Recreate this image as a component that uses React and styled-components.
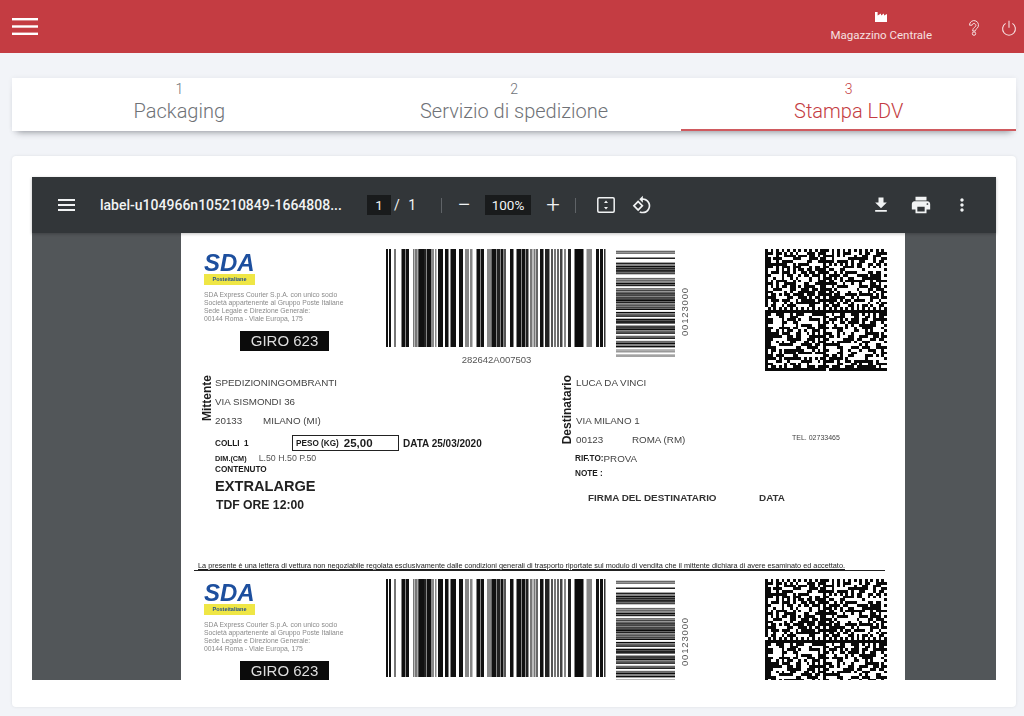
import React from "react";
import styled, { createGlobalStyle } from "styled-components";

const GlobalStyle = createGlobalStyle`
  html, body { margin: 0; padding: 0; background: #f2f4f8; }
  body { font-family: Roboto, "Liberation Sans", sans-serif; }
`;

const RED = "#c43c42";

const Page = styled.div`
  width: 1024px;
  height: 716px;
  overflow: hidden;
  background: #f2f4f8;
`;

const TopBar = styled.header`
  height: 53px;
  background: ${RED};
  display: flex;
  align-items: center;
  justify-content: space-between;
  padding: 0 7px 0 12px;
  box-sizing: border-box;
  color: #fff;
`;

const TopRight = styled.div`
  display: flex;
  align-items: center;
`;

const Warehouse = styled.div`
  display: flex;
  flex-direction: column;
  align-items: center;
  font-size: 11.5px;
  line-height: 14px;
  color: #f6e0e1;
  margin: 1px 36px 0 0;
  svg { margin-bottom: 6px; }
`;

const TopIcon = styled.span`
  display: flex;
  margin-right: ${(p) => p.$gap || 0}px;
  margin-top: 2px;
`;

const Tabs = styled.nav`
  margin: 25px 8px 0 12px;
  height: 53px;
  display: flex;
  background: #fff;
  box-shadow: 0 6px 7px -5px rgba(30, 35, 45, 0.45), 0 0 5px rgba(30, 35, 45, 0.06);
`;

const Tab = styled.div`
  flex: 1;
  box-sizing: border-box;
  display: flex;
  flex-direction: column;
  align-items: center;
  padding-top: 3px;
  color: ${(p) => (p.$active ? RED : "#6f7277")};
  border-bottom: 2px solid ${(p) => (p.$active ? "#cf5a5f" : "transparent")};
`;

const TabNum = styled.span`
  font-size: 14px;
  line-height: 16px;
  font-weight: 300;
`;

const TabLabel = styled.span`
  font-size: 20px;
  line-height: 28px;
  font-weight: 300;
`;

const Card = styled.section`
  margin: 25px 8px 0 12px;
  padding: 21px 20px 27px;
  background: #fff;
  border-radius: 4px;
  box-shadow: 0 0 3px rgba(30, 35, 45, 0.1);
`;

const Viewer = styled.div`
  height: 503px;
  display: flex;
  flex-direction: column;
  background: #525659;
`;

const PdfBar = styled.div`
  height: 56px;
  flex: none;
  display: flex;
  align-items: center;
  background: #323639;
  color: #f1f3f4;
  box-shadow: 0 1px 3px rgba(0, 0, 0, 0.25);
  position: relative;
  z-index: 1;
`;

const PdfIcon = styled.span`
  display: flex;
  margin-left: ${(p) => p.$left || 0}px;
`;

const FileName = styled.span`
  margin-left: 25px;
  width: 267px;
  font-size: 14px;
  font-weight: 500;
  white-space: nowrap;
`;

const NumBox = styled.span`
  width: ${(p) => p.$w}px;
  height: 20px;
  background: #191b1c;
  font-size: 13.5px;
  line-height: 20px;
  text-align: center;
`;

const PageTotal = styled.span`
  margin-left: 3px;
  font-size: 14px;
  width: 22px;
  display: flex;
  justify-content: space-between;
`;

const Sep = styled.span`
  width: 1px;
  height: 15px;
  background: #5f6367;
  margin-left: ${(p) => p.$left}px;
`;

const Glyph = styled.span`
  font-size: 24px;
  font-weight: 300;
  line-height: 20px;
  width: 18px;
  text-align: center;
  margin: 0 ${(p) => p.$right}px 0 ${(p) => p.$left}px;
`;

const PdfBody = styled.div`
  flex: 1;
  min-height: 0;
  overflow: hidden;
  padding-left: 149px;
`;

const Sheet = styled.div`
  width: 724px;
  height: 447px;
  overflow: hidden;
  background: #fff;
`;

const SheetInner = styled.div`
  padding: 16px 0 0 23px;
  filter: blur(0.5px);
  font-family: "Liberation Sans", Arial, sans-serif;
  color: #1c1c1c;
`;

const Head = styled.div`
  height: 124px;
  display: grid;
  grid-template-columns: 182px 230px 149px 122px;
`;

const LogoCol = styled.div`
  padding-top: 4px;
`;

const Sda = styled.div`
  width: 51px;
  font-size: 24px;
  line-height: 19px;
  font-weight: 700;
  font-style: italic;
  color: #1d4f9e;
  white-space: nowrap;
`;

const Poste = styled.div`
  width: 51px;
  height: 11px;
  margin-top: 2px;
  background: #efe645;
  color: #24508f;
  font-size: 5.5px;
  line-height: 11px;
  font-weight: 700;
  text-align: center;
`;

const Legal = styled.div`
  margin-top: 6px;
  font-size: 6.8px;
  line-height: 8px;
  color: #8a8a8a;
  white-space: nowrap;
`;

const Giro = styled.div`
  margin: 8px 0 0 36px;
  width: 89px;
  height: 20px;
  background: #0b0b0b;
  color: #dedede;
  font-size: 15px;
  line-height: 20px;
  text-align: center;
`;

const BarCol = styled.div`
  display: flex;
  flex-direction: column;
  svg { display: block; }
`;

const BarNumber = styled.div`
  width: 221px;
  margin-top: 7px;
  font-size: 9.5px;
  line-height: 12px;
  text-align: center;
  color: #555;
`;

const StackCol = styled.div`
  display: flex;
  align-items: flex-start;
  svg { display: block; }
`;

const StackNumber = styled.span`
  writing-mode: vertical-rl;
  transform: rotate(180deg);
  margin: 38px 0 0 5px;
  font-size: 9.5px;
  line-height: 10px;
  letter-spacing: 0.85px;
  color: #555;
`;

const Body = styled.div`
  height: 187px;
  display: flex;
`;

const Sender = styled.div`
  width: 359px;
  flex: none;
`;

const Address = styled.div`
  display: flex;
`;

const SideTitle = styled.span`
  writing-mode: vertical-rl;
  transform: rotate(180deg);
  align-self: flex-start;
  width: ${(p) => p.$w}px;
  margin: 2px ${(p) => p.$gap}px 0 0;
  font-size: 12px;
  line-height: ${(p) => p.$w}px;
  font-weight: 700;
  white-space: nowrap;
`;

const AddrLines = styled.div`
  flex: 1;
`;

const AddrLine = styled.div`
  height: 19px;
  display: flex;
  align-items: center;
  font-size: 9.8px;
  color: #444;
  white-space: nowrap;
`;

const Cell = styled.span`
  width: ${(p) => p.$w}px;
  flex: none;
`;

const Tel = styled.span`
  font-size: 7px;
  margin-bottom: 4px;
`;

const Details = styled.div`
  padding-left: 11px;
`;

const ColliRow = styled.div`
  margin-top: 5px;
  height: 16px;
  display: flex;
  align-items: center;
`;

const Small = styled.span`
  font-size: 8.2px;
  font-weight: 700;
`;

const Colli = styled(Small)`
  width: 77px;
`;

const DimLabel = styled(Small)`
  font-size: 7.3px;
`;

const PesoBox = styled.div`
  box-sizing: border-box;
  width: 107px;
  height: 16px;
  border: 1.5px solid #222;
  display: flex;
  align-items: center;
  padding-left: 3px;
`;

const PesoValue = styled.span`
  margin-left: 5px;
  font-size: 11.5px;
  font-weight: 700;
`;

const DataText = styled.span`
  margin-left: 4px;
  font-size: 10px;
  font-weight: 700;
  white-space: nowrap;
`;

const SmallRow = styled.div`
  height: 11px;
  margin-top: ${(p) => p.$top || 0}px;
  display: flex;
  align-items: center;
  white-space: nowrap;
`;

const DimValue = styled.span`
  margin-left: 12px;
  font-size: 8.8px;
  color: #555;
`;

const BigText = styled.div`
  margin-top: 1px;
  font-size: 14.6px;
  line-height: 20px;
  font-weight: 700;
  color: #222;
`;

const MidText = styled.div`
  margin: 1px 0 0 1px;
  font-size: 12.2px;
  line-height: 16px;
  font-weight: 700;
  color: #222;
`;

const Receiver = styled.div`
  flex: 1;
`;

const RifRow = styled.div`
  height: 18px;
  padding-left: 12px;
  display: flex;
  align-items: center;
`;

const RifValue = styled.span`
  font-size: 9.8px;
  color: #444;
`;

const NoteRow = styled.div`
  height: 12px;
  padding-left: 12px;
  display: flex;
  align-items: center;
`;

const Sign = styled.div`
  margin: 13px 0 0 25px;
  display: flex;
  font-size: 9.9px;
  line-height: 12px;
  font-weight: 700;
  color: #333;
`;

const SignCell = styled.span`
  width: 171px;
  white-space: nowrap;
`;

const Terms = styled.div`
  margin: 0 0 8px -10px;
  width: 691px;
  box-sizing: border-box;
  height: 11px;
  padding: 1px 0 0 4px;
  border-bottom: 1.5px solid #222;
  font-size: 7.3px;
  line-height: 9px;
  text-decoration: underline;
  white-space: nowrap;
  overflow: hidden;
`;

// bars of the linear code, as [x, width, shade], read off the label
const BARS = [
  [0, 2, "#111"], [3, 2, "#111"], [8, 2, "#777"], [15.5, 3.5, "#111"], [19.5, 3.5, "#111"],
  [27, 1.5, "#777"], [29, 2, "#777"], [31.5, 1.5, "#555"], [33, 5, "#111"], [38, 2, "#222"], [40.5, 5, "#111"],
  [46, 2, "#888"], [49, 1.5, "#888"], [52, 5, "#111"], [59, 3.5, "#111"], [64.5, 5.5, "#111"],
  [73, 4, "#111"], [79, 4, "#888"], [84, 2.5, "#888"], [90.5, 3.5, "#111"], [94.5, 3.5, "#111"],
  [101, 4.5, "#888"], [105.5, 5, "#111"], [111, 3, "#222"], [114.5, 3, "#111"], [118, 2, "#555"],
  [124, 3.5, "#111"], [130.5, 5, "#111"], [136, 3, "#111"], [139.5, 3, "#222"], [144, 2.5, "#777"],
  [147.5, 2, "#777"], [150, 2, "#666"], [154, 3.5, "#111"], [159, 4.5, "#222"], [165, 2, "#555"],
  [168, 2, "#777"], [171, 2, "#666"], [174, 2.5, "#444"], [178, 2, "#888"], [182, 3, "#222"],
  [188.5, 9, "#0b0b0b"], [200.5, 5.5, "#888"], [210, 3, "#111"], [214, 3, "#111"], [218, 1.5, "#333"],
];

const seeded = (seed) => {
  let s = seed;
  return () => {
    s = (s * 16807) % 2147483647;
    return s / 2147483647;
  };
};

const stackRows = (seed) => {
  const rnd = seeded(seed);
  const shades = ["#0c0c0c", "#222", "#666", "#0c0c0c", "#444", "#0c0c0c"];
  const rows = [];
  for (let y = 0; y < 108; y += 1.7) {
    const blank = (y > 9 && y < 12) || (y > 98 && y < 100.2);
    if (blank || rnd() < 0.2) continue;
    const shade = y > 100 ? "#999" : shades[Math.floor(rnd() * shades.length)];
    rows.push([y, shade]);
  }
  return rows;
};

const matrixPath = (seed) => {
  const rnd = seeded(seed);
  const n = 44;
  const m = 122 / n;
  let d = "";
  for (let r = 0; r < n; r++) {
    for (let c = 0; c < n; c++) {
      let on = rnd() < 0.54;
      if (c === 0 || r === n - 1) on = true;
      if (r === 0) on = c % 2 === 0;
      if (c === n - 1) on = r % 2 === 1;
      if (c === 21) on = true;
      if (c === 22) on = r % 2 === 0;
      if (r === 22) on = true;
      if (r === 21) on = c % 2 === 1;
      if (on) d += `M${(c * m).toFixed(2)} ${(r * m).toFixed(2)}h${m.toFixed(2)}v${m.toFixed(2)}h-${m.toFixed(2)}z`;
    }
  }
  return d;
};

const Barcode = () => (
  <svg width="221" height="98" viewBox="0 0 221 98">
    {BARS.map(([x, w, c]) => (
      <rect key={x} x={x} y="0" width={w} height="98" fill={c} />
    ))}
  </svg>
);

const StackedCode = ({ seed }) => (
  <svg width="59" height="108" viewBox="0 0 59 108">
    {stackRows(seed).map(([y, c]) => (
      <rect key={y} x="0" y={y} width="59" height="1.5" fill={c} />
    ))}
  </svg>
);

const Matrix = ({ seed }) => (
  <svg width="122" height="122" viewBox="0 0 122 122" shapeRendering="crispEdges">
    <path d={matrixPath(seed)} fill="#0a0a0a" />
  </svg>
);

const LabelHead = ({ seed, showNumber }) => (
  <Head>
    <LogoCol>
      <Sda>SDA</Sda>
      <Poste>Posteitaliane</Poste>
      <Legal>
        SDA Express Courier S.p.A. con unico socio
        <br />
        Società appartenente al Gruppo Poste Italiane
        <br />
        Sede Legale e Direzione Generale:
        <br />
        00144 Roma - Viale Europa, 175
      </Legal>
      <Giro>GIRO 623</Giro>
    </LogoCol>
    <BarCol>
      <Barcode />
      {showNumber && <BarNumber>282642A007503</BarNumber>}
    </BarCol>
    <StackCol>
      <StackedCode seed={seed} />
      <StackNumber>00123000</StackNumber>
    </StackCol>
    <Matrix seed={seed + 77} />
  </Head>
);

const MenuIcon = ({ w, h, sw, color = "#fff" }) => (
  <svg width={w} height={h} viewBox={`0 0 ${w} ${h}`}>
    <rect x="0" y="0" width={w} height={sw} fill={color} />
    <rect x="0" y={(h - sw) / 2} width={w} height={sw} fill={color} />
    <rect x="0" y={h - sw} width={w} height={sw} fill={color} />
  </svg>
);

const FactoryIcon = () => (
  <svg width="12" height="10" viewBox="0 0 12 10" fill="#fff">
    <path d="M0 10V0h2.6v3.6L6 1.4v2.2l3-2.2v2.2L12 2v8z" />
  </svg>
);

const HelpIcon = () => (
  <svg width="12" height="16" viewBox="0 0 12 16" fill="none" stroke="#f6e0e1" strokeWidth="1">
    <path d="M1.5 5.2a4.5 4.5 0 1 1 7.3 3.4C7.8 9.4 7.4 9.9 7.4 11H4.7c0-2 .8-3 2.1-3.9a1.9 1.9 0 1 0-2.7-1.9z" />
    <circle cx="6" cy="13.6" r="1.7" />
  </svg>
);

const PowerIcon = () => (
  <svg width="16" height="16" viewBox="0 0 16 16" fill="none" stroke="#f6e0e1" strokeWidth="1.1">
    <path d="M4.6 3.4a6.4 6.4 0 1 0 6.8 0" />
    <path d="M8 0.8v7" />
  </svg>
);

const FitIcon = () => (
  <svg width="18" height="16" viewBox="0 0 18 16">
    <rect x="0.8" y="0.8" width="16.4" height="14.4" rx="1.2" fill="none" stroke="#f1f3f4" strokeWidth="1.5" />
    <path d="M9 3.6l2 2.4H7zM9 12.4L7 10h4z" fill="#f1f3f4" />
  </svg>
);

const RotateIcon = () => (
  <svg width="20" height="20" viewBox="0 0 24 24" fill="#f1f3f4">
    <path d="M7.34 6.41L.86 12.9l6.49 6.48 6.49-6.48-6.5-6.49zM3.69 12.9l3.66-3.66L11 12.9l-3.66 3.66-3.65-3.66zm15.67-6.26C17.61 4.88 15.3 4 13 4V.76L8.76 5 13 9.24V6c1.79 0 3.58.68 4.95 2.05 2.73 2.73 2.73 7.17 0 9.9C16.58 19.32 14.79 20 13 20c-.97 0-1.94-.21-2.84-.61l-1.49 1.49C10.02 21.62 11.51 22 13 22c2.3 0 4.61-.88 6.36-2.64 3.52-3.51 3.52-9.21 0-12.72z" />
  </svg>
);

const DownloadIcon = () => (
  <svg width="20" height="20" viewBox="0 0 24 24" fill="#f1f3f4">
    <path d="M19 9h-4V3H9v6H5l7 7 7-7zM5 18v2h14v-2H5z" />
  </svg>
);

const PrintIcon = () => (
  <svg width="22" height="22" viewBox="0 0 24 24" fill="#f1f3f4">
    <path d="M19 8H5c-1.66 0-3 1.34-3 3v6h4v4h12v-4h4v-6c0-1.66-1.34-3-3-3zm-3 11H8v-5h8v5zm3-7c-.55 0-1-.45-1-1s.45-1 1-1 1 .45 1 1-.45 1-1 1zm-1-9H6v4h12V3z" />
  </svg>
);

const MoreIcon = () => (
  <svg width="20" height="20" viewBox="0 0 24 24" fill="#f1f3f4">
    <path d="M12 8c1.1 0 2-.9 2-2s-.9-2-2-2-2 .9-2 2 .9 2 2 2zm0 2c-1.1 0-2 .9-2 2s.9 2 2 2 2-.9 2-2-.9-2-2-2zm0 6c-1.1 0-2 .9-2 2s.9 2 2 2 2-.9 2-2-.9-2-2-2z" />
  </svg>
);

const App = () => {
  return (
    <Page>
      <GlobalStyle />
      <TopBar>
        <MenuIcon w={26} h={17} sw={2.4} />
        <TopRight>
          <Warehouse>
            <FactoryIcon />
            Magazzino Centrale
          </Warehouse>
          <TopIcon $gap={21}>
            <HelpIcon />
          </TopIcon>
          <TopIcon>
            <PowerIcon />
          </TopIcon>
        </TopRight>
      </TopBar>

      <Tabs>
        <Tab>
          <TabNum>1</TabNum>
          <TabLabel>Packaging</TabLabel>
        </Tab>
        <Tab>
          <TabNum>2</TabNum>
          <TabLabel>Servizio di spedizione</TabLabel>
        </Tab>
        <Tab $active>
          <TabNum>3</TabNum>
          <TabLabel>Stampa LDV</TabLabel>
        </Tab>
      </Tabs>

      <Card>
        <Viewer>
          <PdfBar>
            <PdfIcon $left={26}>
              <MenuIcon w={17} h={12} sw={2} color="#f1f3f4" />
            </PdfIcon>
            <FileName>label-u104966n105210849-1664808...</FileName>
            <NumBox $w={24}>1</NumBox>
            <PageTotal>
              <span>/</span>
              <span>1</span>
            </PageTotal>
            <Sep $left={25} />
            <Glyph $left={13} $right={12}>−</Glyph>
            <NumBox $w={46}>100%</NumBox>
            <Glyph $left={13} $right={13}>+</Glyph>
            <Sep $left={0} />
            <PdfIcon $left={21}>
              <FitIcon />
            </PdfIcon>
            <PdfIcon $left={17}>
              <RotateIcon />
            </PdfIcon>
            <PdfIcon $left={219}>
              <DownloadIcon />
            </PdfIcon>
            <PdfIcon $left={19}>
              <PrintIcon />
            </PdfIcon>
            <PdfIcon $left={20}>
              <MoreIcon />
            </PdfIcon>
          </PdfBar>
          <PdfBody>
            <Sheet>
              <SheetInner>
                <LabelHead seed={1234} showNumber />
                <Body>
                  <Sender>
                    <Address>
                      <SideTitle $w={7} $gap={4}>Mittente</SideTitle>
                      <AddrLines>
                        <AddrLine>SPEDIZIONINGOMBRANTI</AddrLine>
                        <AddrLine>VIA SISMONDI 36</AddrLine>
                        <AddrLine>
                          <Cell $w={48}>20133</Cell>
                          MILANO (MI)
                        </AddrLine>
                      </AddrLines>
                    </Address>
                    <Details>
                      <ColliRow>
                        <Colli>COLLI&nbsp;&nbsp;1</Colli>
                        <PesoBox>
                          <Small>PESO (KG)</Small>
                          <PesoValue>25,00</PesoValue>
                        </PesoBox>
                        <DataText>DATA 25/03/2020</DataText>
                      </ColliRow>
                      <SmallRow $top={1.5}>
                        <DimLabel>DIM.(CM)</DimLabel>
                        <DimValue>L.50 H.50 P.50</DimValue>
                      </SmallRow>
                      <SmallRow>
                        <Small>CONTENUTO</Small>
                      </SmallRow>
                      <BigText>EXTRALARGE</BigText>
                      <MidText>TDF ORE 12:00</MidText>
                    </Details>
                  </Sender>
                  <Receiver>
                    <Address>
                      <SideTitle $w={9} $gap={4}>Destinatario</SideTitle>
                      <AddrLines>
                        <AddrLine>LUCA DA VINCI</AddrLine>
                        <AddrLine />
                        <AddrLine>VIA MILANO 1</AddrLine>
                        <AddrLine>
                          <Cell $w={56}>00123</Cell>
                          <Cell $w={160}>ROMA (RM)</Cell>
                          <Tel>TEL. 02733465</Tel>
                        </AddrLine>
                      </AddrLines>
                    </Address>
                    <RifRow>
                      <Small>RIF.TO:</Small>
                      <RifValue>PROVA</RifValue>
                    </RifRow>
                    <NoteRow>
                      <Small>NOTE :</Small>
                    </NoteRow>
                    <Sign>
                      <SignCell>FIRMA DEL DESTINATARIO</SignCell>
                      <span>DATA</span>
                    </Sign>
                  </Receiver>
                </Body>
                <Terms>
                  La presente è una lettera di vettura non negoziabile regolata esclusivamente dalle condizioni generali di trasporto riportate sul modulo di vendita che il mittente dichiara di avere esaminato ed accettato.
                </Terms>
                <LabelHead seed={1234} />
              </SheetInner>
            </Sheet>
          </PdfBody>
        </Viewer>
      </Card>
    </Page>
  );
};

export default App;
